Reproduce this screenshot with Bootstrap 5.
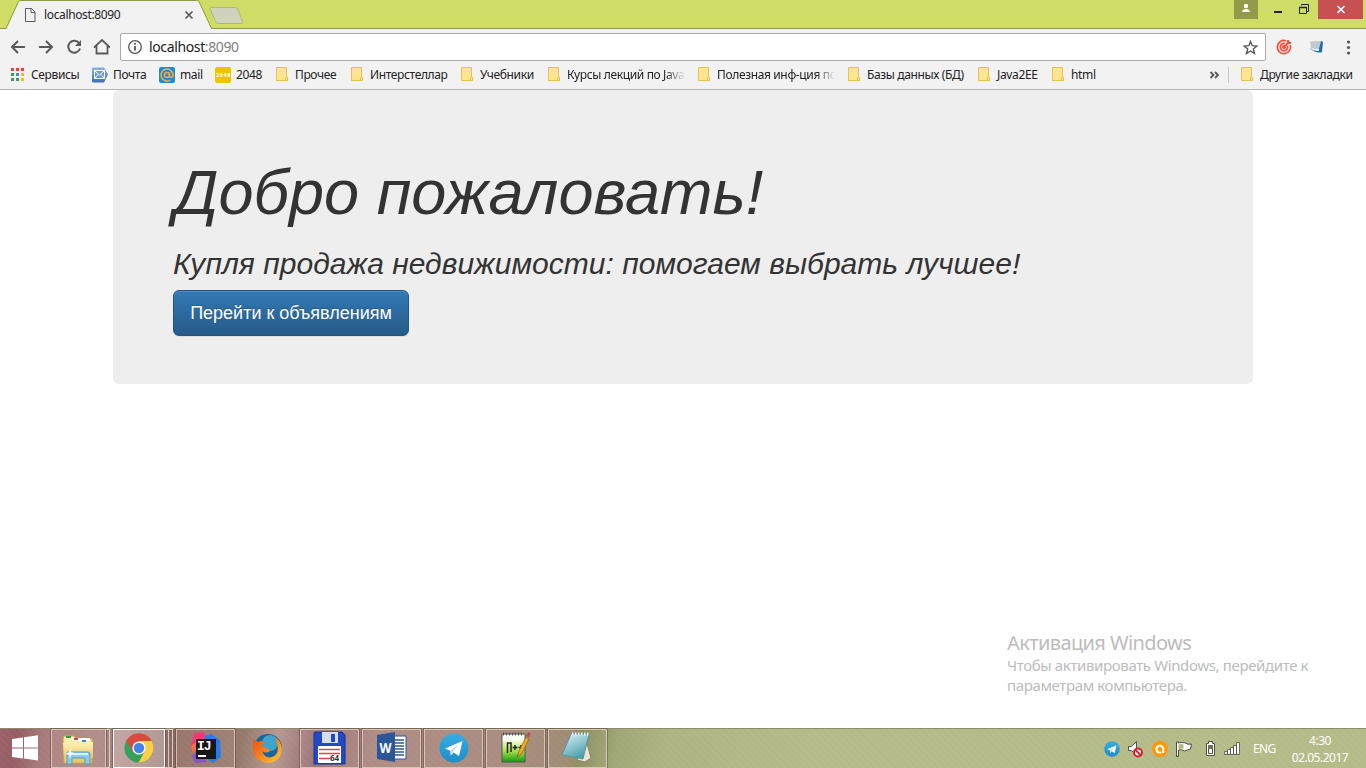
<!DOCTYPE html>
<html lang="ru">
<head>
<meta charset="utf-8">
<title>localhost:8090</title>
<link href="https://cdn.jsdelivr.net/npm/bootstrap@5.3.0/dist/css/bootstrap.min.css" rel="stylesheet">
<style>
html,body{height:768px;overflow:hidden}
body{font:12px/16px "Noto Sans","Open Sans",sans-serif;color:#222;background:#fff}
svg{display:block;flex:none}
.tabstrip{height:29px;background:#cfdd66}
.strip-line{border-bottom:1px solid #8f9a45}
.edge-gap{width:3px}
.toolbar-row{height:32px;background:#f2f2f2}
.tab-item{width:248px;height:29px}
.tab-shape{left:0;top:0}
.tab-label{margin-left:44px;letter-spacing:-.36px;padding-top:7px;width:139px}
.win-btn{height:19px}
.win-user{width:24px;background:#939b4b}
.win-close{width:45px;background:#c75050}
.omnibox{width:1146px;height:28px;border:1px solid #a9a9a9;border-radius:2px;background:#fff;font-size:14px;letter-spacing:-.37px;margin-left:10px;margin-top:4px;padding-left:6px;padding-right:7px}
.omnibox i{font-style:normal;color:#808080}
.omnibox span{margin-left:6px}
.bookbar{height:29px;background:#f2f2f2;border-bottom:1px solid #b6b4b6;padding:0 0 1px 11px}
.bm{flex:none;height:27px;white-space:nowrap;letter-spacing:-.36px}
.bm .folder-name{margin-left:6px}
.w1{width:81px}.w2{width:67px}.w3{width:56px}.w4{width:61px}
.b1{width:75px}.b2{width:110px}.b3{width:87px}.b4{width:150px}.b5{width:150px}.b6{width:130px}.b7{width:74px}.b8{width:154px}
.fade-end{width:118px;-webkit-mask-image:linear-gradient(90deg,#000 84%,transparent);mask-image:linear-gradient(90deg,#000 84%,transparent)}
.page{height:638px}
.welcome{width:1140px;height:294px;margin:0 auto;padding:48px 60px;background:#eee;border-radius:6px;color:#333;font-family:"Liberation Sans",Arial,sans-serif;font-style:italic}
.welcome h1{font-size:63px;line-height:69.3px;margin:20px 0 0 1px;font-weight:400;letter-spacing:.04px}
.welcome h2{font-size:30px;line-height:33px;margin:20px 0 10px;font-weight:400;letter-spacing:.02px}
.go-btn{width:236px;height:46px;padding:10px 0;border:1px solid #245580;border-radius:6px;color:#fff;background:linear-gradient(#337ab7,#265a88);font:18px/24px "Liberation Sans",Arial,sans-serif;text-shadow:0 -1px 0 rgba(0,0,0,.2);box-shadow:inset 0 1px 0 rgba(255,255,255,.15),0 1px 1px rgba(0,0,0,.075)}
.activation{left:1007px;top:540px;color:#bcbcbc;font-size:15px;line-height:20px;white-space:nowrap;letter-spacing:-.37px}
.activation b{display:block;font-weight:400;font-size:20px;line-height:25px;letter-spacing:-.6px}
.taskbar{height:40px;border-top:1px solid #8d8b69;background:repeating-linear-gradient(45deg,rgba(255,255,255,.025) 0 2px,transparent 2px 5px),linear-gradient(100deg,#9c6068 0,#955e64 18px,#a77b7b 45px,#aa8783 100px,#8b6863 165px,#95796b 240px,#b79a91 275px,#956b70 315px,#a6857e 370px,#a18478 500px,#94846a 565px,#7f8856 575px,#9fa777 610px,#aeb481 660px,#b5bb88 800px,#b5bb88 1366px);color:#fff}
.task{height:39px;border:1px solid rgba(239,226,212,.65);background:rgba(230,200,185,.13);box-shadow:0 0 0 1px rgba(80,55,50,.4);width:59px;margin-right:3px;flex:none}
.task svg{margin-top:-1px}
.task-files{width:55px;margin-right:0}
.task-chrome{width:52px;margin-right:0;background:rgba(245,230,225,.38);border-color:#fff}
.task-idea{margin-right:0}
.stack-edge{width:4px;height:39px;border:1px solid rgba(244,233,225,.75);border-left:0;flex:none}
.stack-last{margin-right:3px}
.lang{width:40px;letter-spacing:-.6px;padding-left:8px;margin-left:2px}
.clock-txt{width:70px;font-size:12px;line-height:17px;letter-spacing:-.5px;margin-right:11px}
</style>
<script src="https://cdn.jsdelivr.net/npm/bootstrap@5.3.0/dist/js/bootstrap.bundle.min.js"></script>
</head>
<body>
<svg width="0" height="0" class="position-absolute">
<defs>
<linearGradient id="gBlue" x2="0" y2="1"><stop stop-color="#8fb2e3"/><stop offset="1" stop-color="#3f6fb5"/></linearGradient>
<linearGradient id="gSky" x2="0" y2="1"><stop stop-color="#36aee2"/><stop offset="1" stop-color="#1c8dc9"/></linearGradient>
<linearGradient id="gFold" x2="0" y2="1"><stop stop-color="#fff3b5"/><stop offset="1" stop-color="#e7c766"/></linearGradient>
<linearGradient id="gGreen" x2="0" y2="1"><stop offset=".2" stop-color="#f8fff0"/><stop offset=".6" stop-color="#a9e04c"/><stop offset="1" stop-color="#129a13"/></linearGradient>
<linearGradient id="gPad" x2=".5" y2="1"><stop stop-color="#dff4f8"/><stop offset="1" stop-color="#4a9fae"/></linearGradient>
<linearGradient id="gFox" x2="1" y2="1"><stop stop-color="#e4511e"/><stop offset=".5" stop-color="#f7821d"/><stop offset="1" stop-color="#ffd43c"/></linearGradient>
<symbol id="folder" viewBox="0 0 13 15"><path d="M.5.500h10v9.200l.8.500v3.300H.5z" fill="#ffe591" stroke="#e6c14c"/><path d="M9.500 13.500v-3c0-1 2-1 2 0v3z" fill="#ffe591" stroke="#e6c14c"/></symbol>
<symbol id="tgram" viewBox="0 0 30 30"><circle cx="15" cy="15" r="14.500" fill="url(#gSky)"/><path d="M6 15.400 23.500 8 20 23l-5.400-3.600-2.800 3.200-.5-4.800z" fill="#fff"/><path d="m11.300 17.800 9-7.200-6.500 8.200-2 3.800z" fill="#b9d7e8"/></symbol>
</defs></svg>

<header>
<div class="tabstrip d-flex">
  <div class="tab-item position-relative d-flex">
    <svg class="tab-shape position-absolute" width="248" height="29"><path d="M0 28.500H6L18.500 1.500Q19 .5 21 .5H196.500Q198.500 .5 199 1.500L211.500 28.500H248" fill="none" stroke="#8f9a45"/><path d="M6.500 29 19 2Q19.500 1 21 1H196.500Q198 1 198.500 2L211 29z" fill="#f2f2f2"/><path d="M211.500 7.500H235q2 0 2.700 1.500l4.800 12.500q.7 2-1.500 2H218q-1.600 0-2.200-1.500L210 9q-.5-1.500 1.500-1.500z" fill="#d0d2bd" stroke="#b0b878"/><path d="M25.500 8.500h6l3.500 3.500v9.500h-9.500zM31 8.500v4h4" fill="none" stroke="#5a5a5a"/><path d="m185.500 11.500 7 7m0-7-7 7" stroke="#5a5a5a" stroke-width="1.700"/></svg>
    <span class="tab-label position-relative">localhost:8090</span>
  </div>
  <div class="flex-grow-1 strip-line"></div>
  <div class="d-flex strip-line">
    <div class="win-btn win-user"><svg width="24" height="19"><circle cx="12" cy="6" r="2.200" fill="#fff"/><path d="M8 12V11q1.500-2 4-2t4 2v1z" fill="#fff"/></svg></div>
    <div class="win-btn"><svg width="60" height="19"><path d="M16 12h8" stroke="#222" stroke-width="2"/><path d="M41.500 7.500h7v6h-7zM43.500 5.500V4.500h7v7h-1.500" fill="none" stroke="#222"/><path d="M41 7.500h8" stroke="#222" stroke-width="1.500"/></svg></div>
    <div class="win-btn win-close"><svg width="45" height="19"><path d="m19.500 6 7 7m0-7-7 7" stroke="#fff" stroke-width="1.700"/></svg></div>
    <div class="edge-gap"></div>
  </div>
</div>
<div class="toolbar-row d-flex">
  <svg width="110" height="32" fill="none" stroke="#5a5a5a" stroke-width="2"><path d="M25 18H12m6-6-6 6 6 6M39 18h13m-6-6 6 6-6 6"/><path d="M79.200 14.300A6 6 0 1 0 80 19.500"/><path d="M81 11v6h-6z" fill="#5a5a5a" stroke="none"/><path d="M94 18.500 102 11l8 7.500M96.500 17v7.500h11V17" stroke-width="1.800"/></svg>
  <div class="omnibox d-flex align-items-center">
    <svg width="16" height="16" fill="none" stroke="#555" stroke-width="1.300"><circle cx="8" cy="8" r="6.300"/><path d="M8 7v4.500M8 4v1.700" stroke-width="1.800"/></svg>
    <span>localhost<i>:8090</i></span>
    <svg class="ms-auto" width="15" height="15" fill="none" stroke="#555" stroke-width="1.400"><path d="m7.500 1.500 1.700 4.200 4.600.3-3.500 3 1.200 4.500-4-2.500-4 2.500L4.700 9 1.200 6l4.600-.3z"/></svg>
  </div>
  <svg width="100" height="32"><g transform="translate(18 18)" fill="none" stroke="#fb4b36" stroke-width="1.700"><path d="M2-6.200A6.600 6.600 0 1 0 6.200-2M1-3.500A3.700 3.700 0 1 0 3.500-1"/><path d="m0 0 5.500-5.500M4-7v3h3" stroke-width="2"/><circle r="1.200"/></g><path d="m44 12.500 11-.5-1 8-9-1z" fill="#c3c9cc"/><path d="m43 19 10 1 2-8 2 1-1 10q-5 2-13-4z" fill="#1670b8"/><path d="M43 19l10 1v2q-6 0-10-3" fill="#fff"/><g fill="#555"><circle cx="82.500" cy="13" r="1.600"/><circle cx="82.500" cy="18.500" r="1.600"/><circle cx="82.500" cy="24" r="1.600"/></g></svg>
</div>
<nav class="bookbar d-flex align-items-center">
  <div class="bm w1 d-flex align-items-center"><svg width="20" height="13"><g fill="#e94335"><path d="M0 0h3v3H0zM5 0h3v3H5zM10 0h3v3h-3z"/></g><path d="M0 5h3v3H0zM0 10h3v3H0zM5 10h3v3H5z" fill="#35a05a"/><path d="M5 5h3v3H5z" fill="#4286f5"/><path d="M10 5h3v3h-3zM10 10h3v3h-3z" fill="#fbbc05"/></svg><span>Сервисы</span></div>
  <div class="bm w2 d-flex align-items-center"><svg width="21" height="16"><path d="M1 .5h11l4 7-4 8H1q-1 0-1-1v-13q0-1 1-1z" fill="url(#gBlue)"/><path d="M2.500 3.500h10v8h-10z" fill="#6f97d2" stroke="#fff"/><path d="m2.500 3.500 5 4.500 5-4.500M2.500 11.500l3.500-4m6.500 4L9 7.500" fill="none" stroke="#fff"/></svg><span>Почта</span></div>
  <div class="bm w3 d-flex align-items-center"><svg width="21" height="16"><rect width="16" height="16" rx="2" fill="#168de2"/><g fill="none" stroke="#ffa930" stroke-width="1.500"><circle cx="8" cy="8" r="2.500"/><path d="M10.500 5.500v4q1.700 2 3.500-.5V7.500A6 6 0 1 0 11.500 13"/></g></svg><span>mail</span></div>
  <div class="bm w4 d-flex align-items-center"><svg width="21" height="16"><rect width="16" height="16" rx="2" fill="#edc402"/><text x="1" y="10" font-size="5.500" font-weight="700" fill="#fff" textLength="14">2048</text></svg><span>2048</span></div>
  <div class="bm b1 d-flex align-items-center"><svg width="13" height="15"><use href="#folder"/></svg><span class="folder-name">Прочее</span></div>
  <div class="bm b2 d-flex align-items-center"><svg width="13" height="15"><use href="#folder"/></svg><span class="folder-name">Интерстеллар</span></div>
  <div class="bm b3 d-flex align-items-center"><svg width="13" height="15"><use href="#folder"/></svg><span class="folder-name">Учебники</span></div>
  <div class="bm b4 d-flex align-items-center"><svg width="13" height="15"><use href="#folder"/></svg><span class="folder-name fade-end">Курсы лекций по Java</span></div>
  <div class="bm b5 d-flex align-items-center"><svg width="13" height="15"><use href="#folder"/></svg><span class="folder-name fade-end">Полезная инф-ция по</span></div>
  <div class="bm b6 d-flex align-items-center"><svg width="13" height="15"><use href="#folder"/></svg><span class="folder-name">Базы данных (БД)</span></div>
  <div class="bm b7 d-flex align-items-center"><svg width="13" height="15"><use href="#folder"/></svg><span class="folder-name">Java2EE</span></div>
  <div class="bm b8 d-flex align-items-center"><svg width="13" height="15"><use href="#folder"/></svg><span class="folder-name">html</span></div>
  <svg width="35" height="28"><path d="m4.500 11 3 3-3 3m4.500-6 3 3-3 3" fill="none" stroke="#555" stroke-width="1.800"/><path d="M22.500 6v16" stroke="#c8c8c8"/></svg>
  <div class="bm d-flex align-items-center"><svg width="13" height="15"><use href="#folder"/></svg><span class="folder-name">Другие закладки</span></div>
</nav>
</header>

<main class="page position-relative">
  <section class="welcome">
    <h1>Добро пожаловать!</h1>
    <h2>Купля продажа недвижимости: помогаем выбрать лучшее!</h2>
    <a class="btn go-btn">Перейти к объявлениям</a>
  </section>
  <div class="activation position-absolute"><b>Активация Windows</b>Чтобы активировать Windows, перейдите к<br>параметрам компьютера.</div>
</main>

<footer class="taskbar d-flex">
  <svg width="51" height="39"><path d="m12 10 11-1.500V18.500H12zm12-1.700L38 6.300v12.200H24zM12 19.500h11V29.500L12 28zm12 0h14V31.500l-14-2z" fill="#fff"/></svg>
  <div class="task task-files"><svg width="53" height="38"><path d="m11 11 1-4h10l2 3h16v24H12z" fill="url(#gFold)" stroke="#c9a849"/><path d="M14 7h5v2h-5z" fill="#17a73c"/><path d="M20 9h18v3H20z" fill="#fff"/><path d="M22 9h4v2h-4z" fill="#d14a33"/><path d="M30 11h4v2h-4z" fill="#2b8ce0"/><path d="m11 14 30-1v16H12z" fill="url(#gFold)"/><path d="M15 35V24q0-1 1-1h20q2 0 2 2v10h-5v-6H20v6z" fill="#8fcbe8" stroke="#529dc2"/><path d="M17 25h19" stroke="#d9f4ff" stroke-width="2"/><path d="m18 18 1 5 4 1-4 2-1 4-1-4-4-1 4-2z" fill="#fff" opacity=".8"/></svg></div>
  <div class="stack-edge stack-last"></div>
  <div class="task task-chrome"><svg width="50" height="38"><g transform="translate(25 19)"><circle r="14.500" fill="#34a05b"/><path d="M0 0-12.600-7.200A14.500 14.500 0 0 1 12.600-7.200L0-7z" fill="#db4a3c"/><path d="M0-7H12.600A14.500 14.500 0 0 1-.5 14.500L6 3z" fill="#fdce46"/><path d="M-12.600-7.200-5 5 0 0-3-8z" fill="#db4a3c"/><circle r="6.600" fill="#fff"/><circle r="5.200" fill="#4483ed"/></g></svg></div>
  <div class="stack-edge"></div><div class="stack-edge stack-last"></div>
  <div class="task task-idea"><svg width="57" height="38"><path d="m17 4 9-1 8 9-11 21-7-2 3-10-5-4z" fill="#ef3c78"/><path d="m15 27 6-6 9 12-12 1z" fill="#8754c9"/><path d="M28 7l6-2 9 6 1 17-8 6-8-5z" fill="#247df0"/><path d="m14 17 6-5v9l-4 3z" fill="#f66d42"/><path d="M19 10h20v20H19z" fill="#171717"/><path d="M21 26h8v2h-8z" fill="#fff"/><text x="20" y="21" font-family="Liberation Mono" font-weight="700" font-size="13" letter-spacing="-1" fill="#fff">IJ</text></svg></div>
  <svg width="65" height="39"><g transform="translate(32 19)"><circle cx="1" r="14" fill="#1b659f"/><circle cx="3" cy="-5" r="8" fill="#3ba4cf"/><path d="M-13-9-9-6Q-5-8-2-6L-5-3-2 0Q3 1 3 3-1 6-5 3-2 11 5 9 13 6 10-4L8-11Q15-7 15 2 13 14 1 15-13 14-14 2-15-4-13-9z" fill="url(#gFox)"/></g></svg>
  <div class="task"><svg width="57" height="38"><path d="M14 3h27l3 3v29H13V4z" fill="#2049c5" stroke="#14339a"/><path d="M21 3h16v11H21z" fill="#d9dee6"/><path d="M30 5h4v8h-4z" fill="#2049c5"/><path d="M17 17h23v17H17z" fill="#fff"/><path d="M18 20.500h21M18 24.500h21M18 29.500h11" stroke="#dc4350" stroke-width="1.500"/><text x="29" y="32" font-size="8" font-weight="700" fill="#333">64</text></svg></div>
  <div class="task"><svg width="57" height="38"><path d="M29 7h14v23H29z" fill="#fff" stroke="#2c579b"/><path d="M31 11h10M31 14h10M31 17h10M31 20h10M31 23h10M31 26h10" stroke="#2c579b" stroke-width="1.400"/><path d="m14 6 18-3v30l-18-3z" fill="#2b579a"/><text x="16.500" y="24" font-size="15" font-weight="700" fill="#fff" textLength="12" lengthAdjust="spacingAndGlyphs">W</text></svg></div>
  <div class="task"><svg width="57" height="38"><use href="#tgram" x="14" y="4" width="30" height="30"/></svg></div>
  <div class="task"><svg width="57" height="38"><path d="M15 5h23v28H15z" fill="url(#gGreen)" stroke="#555"/><path d="M16 5h21" stroke="#555" stroke-width="3" stroke-dasharray="1 2"/><path d="M20.500 24V14h3.500v9M25.500 18.500h5m-2.500-2.500v5M31.500 18.500h5m-2.500-2.500v5" fill="none" stroke="#252525" stroke-width="1.500"/><path d="m30 28 2-6 7-14 3 2-7 14z" fill="#edaa26" stroke="#855f18" stroke-width=".7"/><path d="m39 7 2-4 3 1.500-2 4z" fill="#b34f59"/></svg></div>
  <div class="task"><svg width="57" height="38"><path d="m36 7 6 22-6 4-8-2z" fill="#e9e4d4" stroke="#8c8060"/><path d="M22 5h18l-6 25-21-4z" fill="url(#gPad)" stroke="#60929a"/><path d="M23 5h18" stroke="#eee" stroke-width="3" stroke-dasharray="1.500 1.500"/></svg></div>
  <div class="ms-auto d-flex align-items-center">
    <svg width="140" height="39"><use href="#tgram" x="1" y="12" width="16" height="16"/><path d="M25.500 17.500h3l5-5v14l-5-5h-3z" fill="#fff" stroke="#555"/><circle cx="35" cy="23.500" r="4" fill="#fff" stroke="#d81e2c" stroke-width="2"/><path d="m32.500 21 5 5" stroke="#d81e2c" stroke-width="2"/><circle cx="57" cy="20" r="8" fill="#ff9801"/><path d="M60.200 24V20a3.400 3.400 0 1 0-2 3.200" fill="none" stroke="#fff" stroke-width="2.200"/><path d="M73.500 13v14.500h2V21q3-1 6 1l6-2 1-5q-4 1-6-1-4-1-7 0v-1z" fill="#fff" stroke="#4d4e3c"/><path d="M75.500 15.500q3-1 5 0v4.500q-2-1-5 0z" fill="#b0b584"/><path d="M105.500 12.500h4v2h2v12h-8v-12h2z" fill="#fff" stroke="#4d4e3c"/><path d="M105.500 16.500h4v8h-4z" fill="#fff" stroke="#4d4e3c"/><path d="M105 16h5v4h-5z" fill="#6d714f"/><g fill="#fff" stroke="#4d4e3c" stroke-width=".8"><path d="M121.500 22.500h3v3h-3zM124.500 20.500h3v5h-3zM127.500 18.500h3v7h-3zM130.500 16.500h3v9h-3zM133.500 13.500h3v12h-3z"/></g></svg>
    <span class="lang">ENG</span>
    <div class="clock-txt text-center">4:30<br>02.05.2017</div>
  </div>
</footer>
</body>
</html>
